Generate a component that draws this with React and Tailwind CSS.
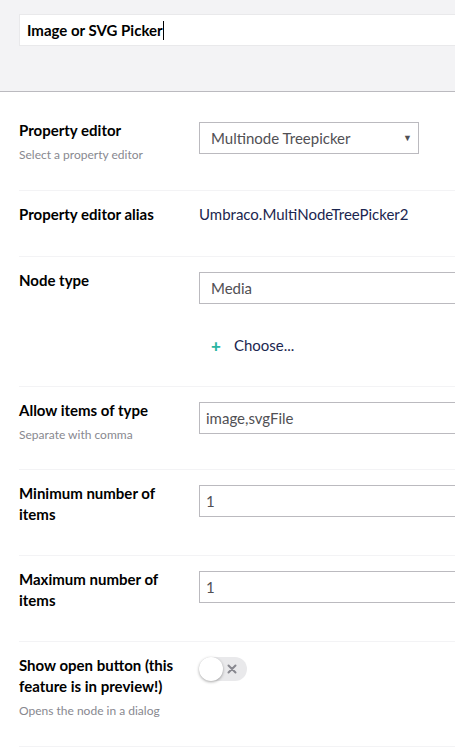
import React from "react";

const font = { fontFamily: "Lato, 'Open Sans', sans-serif" };

function Label({ children, desc }) {
  return (
    <div className="w-[180px] shrink-0">
      <div className="text-[15px] font-bold leading-[21px] text-[#000000] pr-2">{children}</div>
      {desc && <div className="mt-[6px] text-[12px] leading-[16px] text-[#88888f]">{desc}</div>}
    </div>
  );
}

function Row({ label, desc, children, pb }) {
  return (
    <div className={`flex border-b border-[#f3f3f5] pt-[13px] ${pb}`}>
      <Label desc={desc}>{label}</Label>
      <div className="flex-1 min-w-0">{children}</div>
    </div>
  );
}

function TextInput({ value, pl }) {
  return (
    <div className={`mt-[2px] h-[32px] w-[400px] border border-[#bbbabf] bg-white flex items-center ${pl} text-[15px] text-[#515054]`}>
      {value}
    </div>
  );
}

export default function App() {
  return (
    <div className="w-[455px] h-[748px] overflow-hidden bg-white" style={font}>
      <div className="h-[92px] bg-[#f3f3f5] border-b border-[#bbbabf] pt-[14px] pl-[19px]">
        <div className="h-[32px] w-[500px] bg-white border border-[#e9e9eb] flex items-center pl-[7px] text-[15px] font-bold text-[#000]">
          Image or SVG Picker<span className="inline-block w-px h-[19px] bg-black"></span>
        </div>
      </div>
      <div className="pl-[19px] pt-[15px] w-[600px]">
        <Row label="Property editor" desc="Select a property editor" pb="pb-[27px]">
          <div className="mt-[2px] h-[32px] w-[220px] border border-[#bbbabf] bg-white flex items-center justify-between pl-[11px] pr-[6px] text-[15px] text-[#515054]">
            <span>Multinode Treepicker</span>
            <span className="text-[9px] text-[#515054]">▼</span>
          </div>
        </Row>
        <Row label="Property editor alias" pb="pb-[31px]">
          <div className="text-[15px] leading-[21px] text-[#1b264f]">Umbraco.MultiNodeTreePicker2</div>
        </Row>
        <Row label="Node type" pb="pb-[31px]">
          <TextInput value="Media" pl="pl-[11px]" />
          <div className="mt-[31px] flex items-center pl-[12px] h-[20px] text-[15px] text-[#1b264f]">
            <span className="text-[#2bb5a2] font-black text-[17px] leading-none mr-[13px]">+</span>
            <span>Choose...</span>
          </div>
        </Row>
        <Row label="Allow items of type" desc="Separate with comma" pb="pb-[26px]">
          <TextInput value="image,svgFile" pl="pl-[6px]" />
        </Row>
        <Row label={<>Minimum number of<br />items</>} pb="pb-[30px]">
          <TextInput value="1" pl="pl-[6px]" />
        </Row>
        <Row label={<>Maximum number of<br />items</>} pb="pb-[30px]">
          <TextInput value="1" pl="pl-[6px]" />
        </Row>
        <Row label={<>Show open button (this<br />feature is in preview!)</>} desc="Opens the node in a dialog" pb="pb-[27px]">
          <div className="mt-[2px] relative h-[24px] w-[48px] rounded-full bg-[#e9e9eb]">
            <div className="absolute left-0 top-0 h-[24px] w-[24px] rounded-full bg-white shadow-[0_1px_3px_rgba(0,0,0,0.35)]"></div>
            <svg className="absolute left-[28px] top-[7px]" width="10" height="10" viewBox="0 0 10 10">
              <path d="M1.5 1.5 L8.5 8.5 M8.5 1.5 L1.5 8.5" stroke="#88888f" strokeWidth="2" strokeLinecap="round" />
            </svg>
          </div>
        </Row>
      </div>
    </div>
  );
}
